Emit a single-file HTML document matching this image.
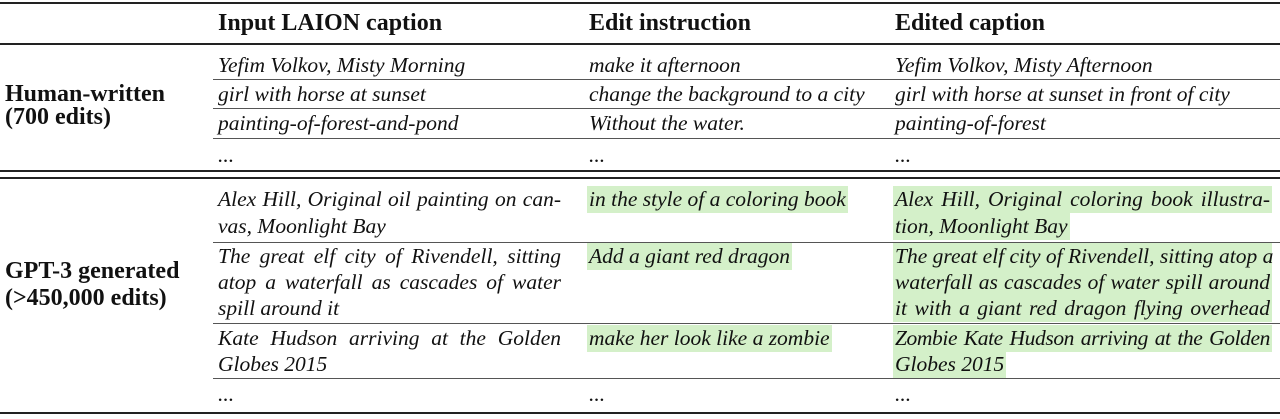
<!DOCTYPE html>
<html><head><meta charset="utf-8"><style>
body{margin:0;width:1280px;height:419px;background:#fff;position:relative;overflow:hidden;font-family:"Liberation Serif",serif;color:#111}
.l{position:absolute;left:0;width:1280px;background:#222}
.t{position:absolute;font-size:21.5px;font-style:italic;white-space:nowrap;line-height:27px;height:27px}
.b{position:absolute;font-size:24px;font-weight:bold;white-space:nowrap;line-height:26px}
.j{display:inline-block;text-align:justify;text-align-last:justify}
.g{background:#d4f0c9;display:inline-block;line-height:27px;padding:0 2px;margin-left:-2px}
</style></head><body>
<div class="l" style="top:2px;height:2px"></div>
<div class="l" style="top:43px;height:1.5px"></div>
<div class="l" style="left:213px;width:1067px;top:79px;height:1px;background:#555"></div>
<div class="l" style="left:213px;width:1067px;top:108px;height:1px;background:#555"></div>
<div class="l" style="left:213px;width:1067px;top:138px;height:1px;background:#555"></div>
<div class="l" style="top:170px;height:1.5px"></div>
<div class="l" style="top:177px;height:1.5px"></div>
<div class="l" style="left:213px;width:1067px;top:242px;height:1px;background:#555"></div>
<div class="l" style="left:213px;width:1067px;top:323px;height:1px;background:#555"></div>
<div class="l" style="left:213px;width:1067px;top:378px;height:1px;background:#555"></div>
<div class="l" style="top:412px;height:2px"></div>

<div class="b" style="left:218px;top:10px">Input LAION caption</div>
<div class="b" style="left:589px;top:10px">Edit instruction</div>
<div class="b" style="left:895px;top:10px">Edited caption</div>

<div class="b" style="left:5px;top:81px">Human-written</div>
<div class="b" style="left:5px;top:104px">(700 edits)</div>
<div class="b" style="left:5px;top:258px">GPT-3 generated</div>
<div class="b" style="left:5px;top:285px">(&gt;450,000 edits)</div>

<div class="t" style="left:218px;top:52px">Yefim Volkov, Misty Morning</div>
<div class="t" style="left:589px;top:52px">make it afternoon</div>
<div class="t" style="left:895px;top:52px">Yefim Volkov, Misty Afternoon</div>
<div class="t" style="left:218px;top:81px">girl with horse at sunset</div>
<div class="t" style="left:589px;top:81px">change the background to a city</div>
<div class="t" style="left:895px;top:81px">girl with horse at sunset in front of city</div>
<div class="t" style="left:218px;top:110px">painting-of-forest-and-pond</div>
<div class="t" style="left:589px;top:110px">Without the water.</div>
<div class="t" style="left:895px;top:110px">painting-of-forest</div>
<div class="t" style="left:218px;top:142px">...</div>
<div class="t" style="left:589px;top:142px">...</div>
<div class="t" style="left:895px;top:142px">...</div>

<div class="t" style="left:218px;top:186px"><span class="j" style="width:343px">Alex Hill, Original oil painting on can-</span></div>
<div class="t" style="left:218px;top:213px">vas, Moonlight Bay</div>
<div class="t" style="left:589px;top:186px"><span class="g">in the style of a coloring book</span></div>
<div class="t" style="left:895px;top:186px"><span class="g j" style="width:375px">Alex Hill, Original coloring book illustra-</span></div>
<div class="t" style="left:895px;top:213px"><span class="g">tion, Moonlight Bay</span></div>

<div class="t" style="left:218px;top:243px"><span class="j" style="width:343px">The great elf city of Rivendell, sitting</span></div>
<div class="t" style="left:218px;top:269px"><span class="j" style="width:343px">atop a waterfall as cascades of water</span></div>
<div class="t" style="left:218px;top:295px">spill around it</div>
<div class="t" style="left:589px;top:243px"><span class="g">Add a giant red dragon</span></div>
<div class="t" style="left:895px;top:243px"><span class="g j" style="width:375px">The great elf city of Rivendell, sitting atop a</span></div>
<div class="t" style="left:895px;top:269px"><span class="g j" style="width:375px">waterfall as cascades of water spill around</span></div>
<div class="t" style="left:895px;top:295px"><span class="g j" style="width:375px">it with a giant red dragon flying overhead</span></div>

<div class="t" style="left:218px;top:325px"><span class="j" style="width:343px">Kate Hudson arriving at the Golden</span></div>
<div class="t" style="left:218px;top:351px">Globes 2015</div>
<div class="t" style="left:589px;top:325px"><span class="g">make her look like a zombie</span></div>
<div class="t" style="left:895px;top:325px"><span class="g j" style="width:375px;letter-spacing:-0.4px">Zombie Kate Hudson arriving at the Golden</span></div>
<div class="t" style="left:895px;top:351px"><span class="g">Globes 2015</span></div>

<div class="t" style="left:218px;top:381px">...</div>
<div class="t" style="left:589px;top:381px">...</div>
<div class="t" style="left:895px;top:381px">...</div>
</body></html>
